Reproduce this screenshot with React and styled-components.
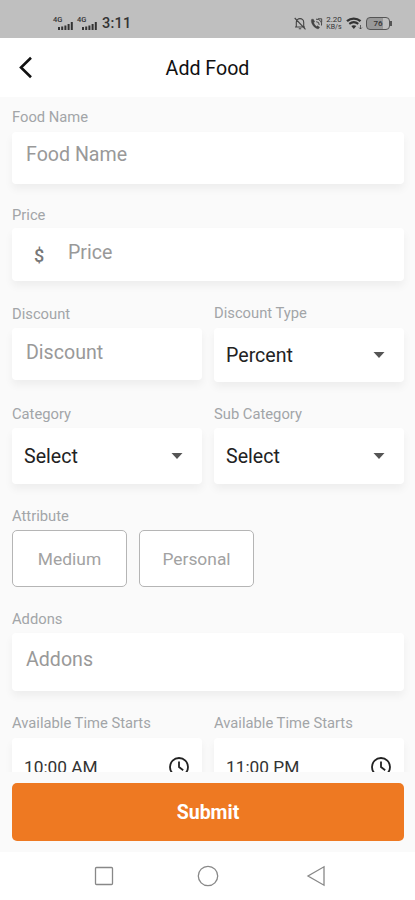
import styled, { createGlobalStyle } from "styled-components";

const fields = {
  time: [
    { label: "Available Time Starts", value: "10:00 AM" },
    { label: "Available Time Starts", value: "11:00 PM" },
  ],
  attributes: ["Medium", "Personal"],
};

export default function App() {
  return (
    <>
      <GlobalStyle />
      <Screen>
        <StatusBar />
        <Header>
          <BackButton aria-label="Back">
            <svg width="16" height="24" viewBox="0 0 16 24">
              <path d="M13 1.7 3 11.5l10 9.8" fill="none" stroke="#111" strokeWidth="2.6" />
            </svg>
          </BackButton>
          <Title>Add Food</Title>
        </Header>
        <Form>
          <TextField label="Food Name" gap={7} height={52} inset={10} />
          <Row $top={23}>
            <TextField label="Price" gap={5} height={53} inset={12} prefix="$" />
          </Row>
          <Row $top={24}>
            <TextField label="Discount" lead={1} gap={6} height={52} inset={12} />
            <SelectField label="Discount Type" value="Percent" gap={7} height={54} />
          </Row>
          <Row $top={24}>
            <SelectField label="Category" value="Select" gap={6} height={56} />
            <SelectField label="Sub Category" value="Select" gap={6} height={56} />
          </Row>
          <Row $top={24}>
            <Group>
              <Label $gap={6}>Attribute</Label>
              <Chips>
                {fields.attributes.map((name) => (
                  <Chip key={name}>{name}</Chip>
                ))}
              </Chips>
            </Group>
          </Row>
          <Row $top={24}>
            <TextField label="Addons" gap={6} height={58} inset={14} />
          </Row>
          <Row $top={24}>
            {fields.time.map(({ label, value }) => (
              <Group key={value}>
                <Label $gap={7}>{label}</Label>
                <TimeBox>
                  {value}
                  <ClockIcon />
                </TimeBox>
              </Group>
            ))}
          </Row>
        </Form>
        <Footer>
          <SubmitButton>Submit</SubmitButton>
        </Footer>
        <NavigationBar />
      </Screen>
    </>
  );
}

function TextField({ label, lead, gap, height, inset, prefix }) {
  return (
    <Group $lead={lead}>
      <Label $gap={gap}>{label}</Label>
      <InputBox $height={height} $inset={inset}>
        {prefix && <Prefix>{prefix}</Prefix>}
        <Placeholder>{label}</Placeholder>
      </InputBox>
    </Group>
  );
}

function SelectField({ label, value, gap, height }) {
  return (
    <Group>
      <Label $gap={gap}>{label}</Label>
      <SelectBox $height={height}>
        {value}
        <svg width="12" height="6" viewBox="0 0 12 6">
          <path d="M.5 0h11L6 6z" fill="#555" />
        </svg>
      </SelectBox>
    </Group>
  );
}

function ClockIcon() {
  return (
    <svg width="20" height="20" viewBox="0 0 20 20" fill="none" stroke="#222" strokeWidth="1.8">
      <circle cx="10" cy="10" r="9" />
      <path d="M10 4.5V10l4.2 3.2" />
    </svg>
  );
}

function Signal() {
  return (
    <SignalWrapper>
      <SignalLabel>4G</SignalLabel>
      <svg width="15" height="8" viewBox="0 0 15 8" fill="#333">
        <path d="M0 5h2v3H0zM3.2 4.4h2V8h-2zM6.4 3.4h2V8h-2zM9.6 2h2v6h-2zM12.8 0h2v8h-2z" />
      </svg>
    </SignalWrapper>
  );
}

function StatusBar() {
  return (
    <StatusWrapper>
      <StatusSide>
        <Signal />
        <Signal />
        <Clock>3:11</Clock>
      </StatusSide>
      <StatusIcons>
        <svg width="12" height="13" viewBox="0 0 12 13" fill="none" stroke="#444" strokeWidth="1.1">
          <path d="M1 10h10M2.3 9.8V5.3a3.7 3.7 0 0 1 7.4 0v4.5M4.8 11.8h2.4M.7 1l10.8 11.3" />
        </svg>
        <svg width="13" height="12" viewBox="0 0 13 12" fill="none" stroke="#444">
          <path d="M1.7 1.2C.3 3 2.5 9.5 8.2 11l1.5-1.7-2.2-1.5-1 .7C5 7.5 4 6 3.7 4.6l1-.8L3.3 1.2z" fill="#444" strokeWidth=".4" />
          <path d="M6 1.2a5 5 0 0 1 5.5 6.3M6.2 3.7a3 3 0 0 1 3 3.2M8 .8h3.7v3.5" strokeWidth="1" />
        </svg>
        <Speed>
          <span>2.20</span>
          <small>KB/s</small>
        </Speed>
        <svg width="17" height="13" viewBox="0 0 17 13" fill="none" stroke="#333">
          <path d="M1 4.2c4-3.4 9.5-3.4 13.5 0" strokeWidth="2.4" />
          <path d="M3.3 6.9c2.8-2.2 6.2-2.2 9 0" strokeWidth="2" />
          <path d="m5.3 9 2.5 3 2.5-3c-1.5-1.1-3.5-1.1-5 0z" fill="#333" stroke="none" />
          <path d="M14.5 8v4M13 10.5l1.5 1.5 1.5-1.5" strokeWidth=".7" />
        </svg>
        <Battery>
          <BatteryBody>76</BatteryBody>
          <BatteryTip />
        </Battery>
      </StatusIcons>
    </StatusWrapper>
  );
}

function NavigationBar() {
  return (
    <NavWrapper>
      <svg width="20" height="20" viewBox="0 0 20 20">
        <rect x="1.5" y="1.5" width="17" height="17" rx="1" />
      </svg>
      <svg width="22" height="22" viewBox="0 0 22 22">
        <circle cx="11" cy="11" r="9.7" />
      </svg>
      <svg width="20" height="22" viewBox="0 0 20 22">
        <path d="M18 1.8v18.4L2 11z" />
      </svg>
    </NavWrapper>
  );
}

const GlobalStyle = createGlobalStyle`
  * {
    box-sizing: border-box;
  }
  body {
    margin: 0;
    font-family: Roboto, "Liberation Sans", sans-serif;
  }
  button {
    font-family: inherit;
    border: none;
    padding: 0;
  }
  svg {
    display: block;
    flex-shrink: 0;
  }
`;

const Screen = styled.div`
  width: 415px;
  height: 900px;
  display: flex;
  flex-direction: column;
  overflow: hidden;
  background: #fafafa;
`;

const StatusWrapper = styled.div`
  height: 38px;
  flex-shrink: 0;
  display: flex;
  justify-content: space-between;
  padding: 15px 23px 0 53px;
  background: #bfbfbf;
  color: #333;
`;

const StatusSide = styled.div`
  display: flex;
  height: 16px;
  gap: 4px;
`;

const SignalWrapper = styled.div`
  width: 20px;
  display: flex;
  flex-direction: column;
  align-items: flex-end;
`;

const SignalLabel = styled.span`
  width: 100%;
  height: 7px;
  font-size: 7.5px;
  line-height: 9px;
  font-weight: 500;
`;

const Clock = styled.span`
  margin-left: 1px;
  font-size: 14.5px;
  line-height: 18px;
  font-weight: 500;
  letter-spacing: 0.2px;
`;

const StatusIcons = styled.div`
  display: flex;
  align-items: center;
  height: 17px;
  gap: 3.5px;
`;

const Speed = styled.div`
  width: 16px;
  display: flex;
  flex-direction: column;
  align-items: center;
  font-size: 8px;
  line-height: 8px;

  small {
    font-size: 7px;
    line-height: 7px;
  }
`;

const Battery = styled.div`
  display: flex;
  align-items: center;
`;

const BatteryBody = styled.div`
  width: 24px;
  height: 13px;
  border: 1.5px solid #555;
  border-radius: 4px;
  background: linear-gradient(90deg, #999 74%, #bfbfbf 74%);
  font-size: 8px;
  line-height: 11px;
  font-weight: 500;
  text-align: center;
`;

const BatteryTip = styled.div`
  width: 2px;
  height: 5px;
  background: #555;
`;

const Header = styled.header`
  height: 59px;
  flex-shrink: 0;
  display: grid;
  grid-template-columns: 60px 1fr 60px;
  align-items: center;
  background: #fff;
`;

const BackButton = styled.button`
  padding-left: 18px;
  background: none;
`;

const Title = styled.h1`
  margin: 0;
  padding-top: 1px;
  font-size: 19.6px;
  font-weight: 400;
  text-align: center;
  color: #111;
`;

const Form = styled.main`
  height: 675px;
  flex-shrink: 0;
  overflow: hidden;
  padding: 12px 11px 0 12px;
`;

const Row = styled.div`
  display: flex;
  align-items: flex-start;
  gap: 12px;
  margin-top: ${({ $top }) => $top}px;
`;

const Group = styled.div`
  flex: 1;
  min-width: 0;
  padding-top: ${({ $lead = 0 }) => $lead}px;
`;

const Label = styled.div`
  margin-bottom: ${({ $gap }) => $gap}px;
  font-size: 14.75px;
  line-height: 16px;
  color: #a2a5a8;
`;

const Box = styled.div`
  display: flex;
  background: #fff;
  border-radius: 4px;
  box-shadow: 0 5px 8px rgba(0, 0, 0, 0.05);
  font-size: 19.6px;
`;

const InputBox = styled(Box)`
  height: ${({ $height }) => $height}px;
  padding: ${({ $inset }) => $inset}px 14px 0;
  line-height: 26px;
`;

const Placeholder = styled.span`
  color: #999;
`;

const Prefix = styled.span`
  width: 42px;
  padding: 3px 0 0 8px;
  font-size: 18px;
  font-weight: 500;
  color: #777;
`;

const SelectBox = styled(Box)`
  height: ${({ $height }) => $height}px;
  align-items: center;
  justify-content: space-between;
  padding: 0 19px 0 12px;
  color: #222;
`;

const TimeBox = styled(Box)`
  height: 57px;
  align-items: center;
  justify-content: space-between;
  padding: 0 13px 0 12px;
  font-size: 17.3px;
  color: #333;
`;

const Chips = styled.div`
  display: flex;
  gap: 12px;
`;

const Chip = styled.div`
  width: 115px;
  height: 57px;
  border: 1px solid #b5b5b5;
  border-radius: 5px;
  background: #fff;
  font-size: 17.4px;
  line-height: 56px;
  text-align: center;
  color: #a2a2a2;
`;

const Footer = styled.div`
  height: 80px;
  flex-shrink: 0;
  padding: 11px 11px 0 12px;
`;

const SubmitButton = styled.button`
  width: 100%;
  height: 58px;
  border-radius: 5px;
  background: #ee7922;
  color: #fff;
  font-size: 19.5px;
  font-weight: 700;
`;

const NavWrapper = styled.nav`
  height: 48px;
  flex-shrink: 0;
  display: flex;
  align-items: center;
  gap: 83px;
  padding-left: 94px;
  background: #fff;

  svg {
    fill: none;
    stroke: #888;
    stroke-width: 1.3;
  }

  svg:last-child {
    margin-left: 4px;
  }
`;
